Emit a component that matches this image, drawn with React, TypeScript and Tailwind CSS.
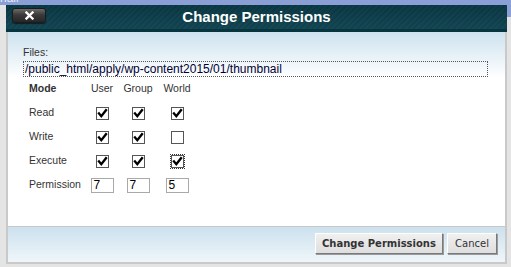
import React from 'react';

const Check: React.FC<{ checked: boolean; focused?: boolean }> = ({ checked, focused }) => (
  <span
    className={`flex items-center justify-center w-[13px] h-[13px] border border-[#555] bg-white ${
      focused ? 'outline outline-1 outline-dotted outline-[#333] outline-offset-0' : ''
    }`}
  >
    {checked && (
      <svg width="11" height="11" viewBox="0 0 11 11">
        <path d="M2 5.5 L4.3 8.2 L9 2.3" fill="none" stroke="#000" strokeWidth="2.4" strokeLinecap="square" />
      </svg>
    )}
  </span>
);

const PermInput: React.FC<{ value: string }> = ({ value }) => (
  <span className="block w-[23px] h-[15px] border border-[#a9a9a9] bg-white pl-[2px] text-[12px] leading-[13px] text-black">
    {value}
  </span>
);

const rows = [
  { label: 'Read', values: [true, true, true] },
  { label: 'Write', values: [true, true, false] },
  { label: 'Execute', values: [true, true, true] },
];

const App: React.FC = () => {
  return (
    <div className="relative w-[511px] h-[267px] overflow-hidden bg-[#e4e4e4] font-['Liberation_Sans',Arial,sans-serif]">
      {/* page behind the dialog */}
      <div className="h-[5px] bg-[#8b9fd7] overflow-hidden">
        <span className="block -mt-[9px] text-[12px] leading-[14px] text-[#e8ecf8]">nail</span>
      </div>
      <div className="absolute right-0 top-[5px] w-[4px] h-[12px] bg-[#8b9fd7]" />

      <div className="ml-[6px] w-[501px]">
        {/* Header */}
        <div className="relative h-[27px] bg-[repeating-linear-gradient(135deg,#0c3c49_0px,#0c3c49_2px,#0e4351_2px,#0e4351_4px)]">
          <div className="h-[24px] flex items-center justify-center bg-[linear-gradient(to_bottom,rgba(0,0,0,0.12),rgba(255,255,255,0.03))]">
            <span className="text-[15px] font-bold text-white pt-[1px]">Change Permissions</span>
          </div>
          <div className="h-[3px] bg-[#063540]" />
          <button className="absolute left-[6px] top-[3px] w-[34px] h-[15px] rounded-[3px] border border-[#1b1b1b] bg-[linear-gradient(to_bottom,#6a6a6a,#3a3a3a_45%,#262626)] shadow-[0_1px_1px_rgba(0,0,0,0.5)] flex items-center justify-center">
            <svg width="9" height="9" viewBox="0 0 9 9">
              <path d="M1.5 1.5 L7.5 7.5 M7.5 1.5 L1.5 7.5" stroke="#fff" strokeWidth="2.3" strokeLinecap="square" />
            </svg>
          </button>
        </div>

        {/* Body */}
        <div className="h-[194px] border-x-2 border-[#c9c9c9] bg-[linear-gradient(to_bottom,#cde2ef,#ffffff_46px)] pl-[15px] pr-[15px] pt-[13px]">
          <div className="text-[10.5px] leading-[14px] text-[#333]">Files:</div>
          <div className="mt-[2px] w-[465px] h-[16px] border border-dotted border-[#555] pl-[1px] text-[12px] leading-[14px] text-[#000033]">
            /public_html/apply/wp-content2015/01/thumbnail
          </div>

          {/* Mode table */}
          <div className="grid grid-cols-[61px_24px_48px_30px] auto-rows-[24px] items-center justify-items-center pl-[6px] text-[10.5px] text-[#333]">
            <span className="justify-self-start font-bold">Mode</span>
            <span>User</span>
            <span>Group</span>
            <span>World</span>

            {rows.map((row) => (
              <React.Fragment key={row.label}>
                <span className="justify-self-start">{row.label}</span>
                {row.values.map((v, i) => (
                  <Check key={i} checked={v} focused={row.label === 'Execute' && i === 2} />
                ))}
              </React.Fragment>
            ))}

            <span className="justify-self-start">Permission</span>
            <PermInput value="7" />
            <PermInput value="7" />
            <PermInput value="5" />
          </div>
        </div>

        {/* Footer */}
        <div className="h-[38px] border-t border-x-2 border-b-2 border-[#c9c9c9] bg-[linear-gradient(to_bottom,#cce1ee,#eff6fa)] flex justify-end items-start gap-[4px] pt-[6px] pr-[8px]">
          <button className="h-[21px] w-[128px] bg-[linear-gradient(to_bottom,#f0f0f0,#dedede)] border border-t-white border-l-white border-r-[#7a7a7a] border-b-[#7a7a7a] shadow-[1px_1px_0_#9a9a9a] font-['DejaVu_Sans',Verdana,sans-serif] text-[10px] font-bold text-[#333]">
            Change Permissions
          </button>
          <button className="h-[21px] w-[50px] bg-[linear-gradient(to_bottom,#f0f0f0,#dedede)] border border-t-white border-l-white border-r-[#7a7a7a] border-b-[#7a7a7a] shadow-[1px_1px_0_#9a9a9a] font-['DejaVu_Sans',Verdana,sans-serif] text-[10px] text-[#333]">
            Cancel
          </button>
        </div>
      </div>
    </div>
  );
};

export default App;
